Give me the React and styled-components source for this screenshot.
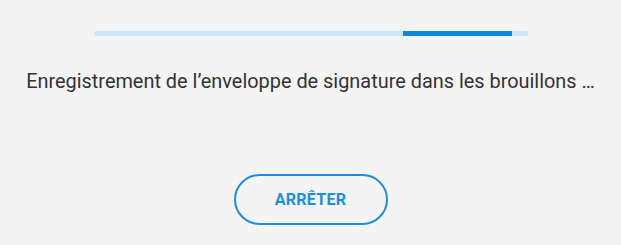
import styled, { createGlobalStyle } from "styled-components";

const GlobalStyle = createGlobalStyle`
  html, body {
    margin: 0;
    padding: 0;
    background: #f4f4f4;
    font-family: Roboto, "Liberation Sans", sans-serif;
  }
`;

// Saving screen: progress bar, status message and a stop button
const App = () => {
  const progress = { start: 71.4, end: 96.5 }; // percent of the track

  return (
    <Screen>
      <GlobalStyle />
      <Track>
        <Fill
          style={{
            left: `${progress.start}%`,
            width: `${progress.end - progress.start}%`,
          }}
        />
      </Track>
      <Message>
        Enregistrement de l’enveloppe de signature dans les brouillons …
      </Message>
      <StopButton type="button">ARRÊTER</StopButton>
    </Screen>
  );
};

const Screen = styled.div`
  width: 621px;
  height: 245px;
  box-sizing: border-box;
  padding-top: 31px;
  display: flex;
  flex-direction: column;
  align-items: center;
`;

const Track = styled.div`
  position: relative;
  width: 434px;
  height: 5px;
  border-radius: 3px;
  background: #cfe6f8;
  overflow: hidden;
`;

const Fill = styled.div`
  position: absolute;
  top: 0;
  bottom: 0;
  background: #0b88e0;
`;

const Message = styled.p`
  margin: 34px 0 0;
  font-size: 19.9px;
  line-height: 24px;
  color: #333333;
  white-space: nowrap;
`;

const StopButton = styled.button`
  margin-top: 80px;
  width: 154px;
  height: 51px;
  border: 2.5px solid #1a8fe2;
  border-radius: 26px;
  background: transparent;
  color: #1a8fe2;
  font-family: Roboto, "Liberation Sans", sans-serif;
  font-size: 16px;
  font-weight: 700;
  letter-spacing: 0.3px;
  cursor: pointer;
`;

export default App;
